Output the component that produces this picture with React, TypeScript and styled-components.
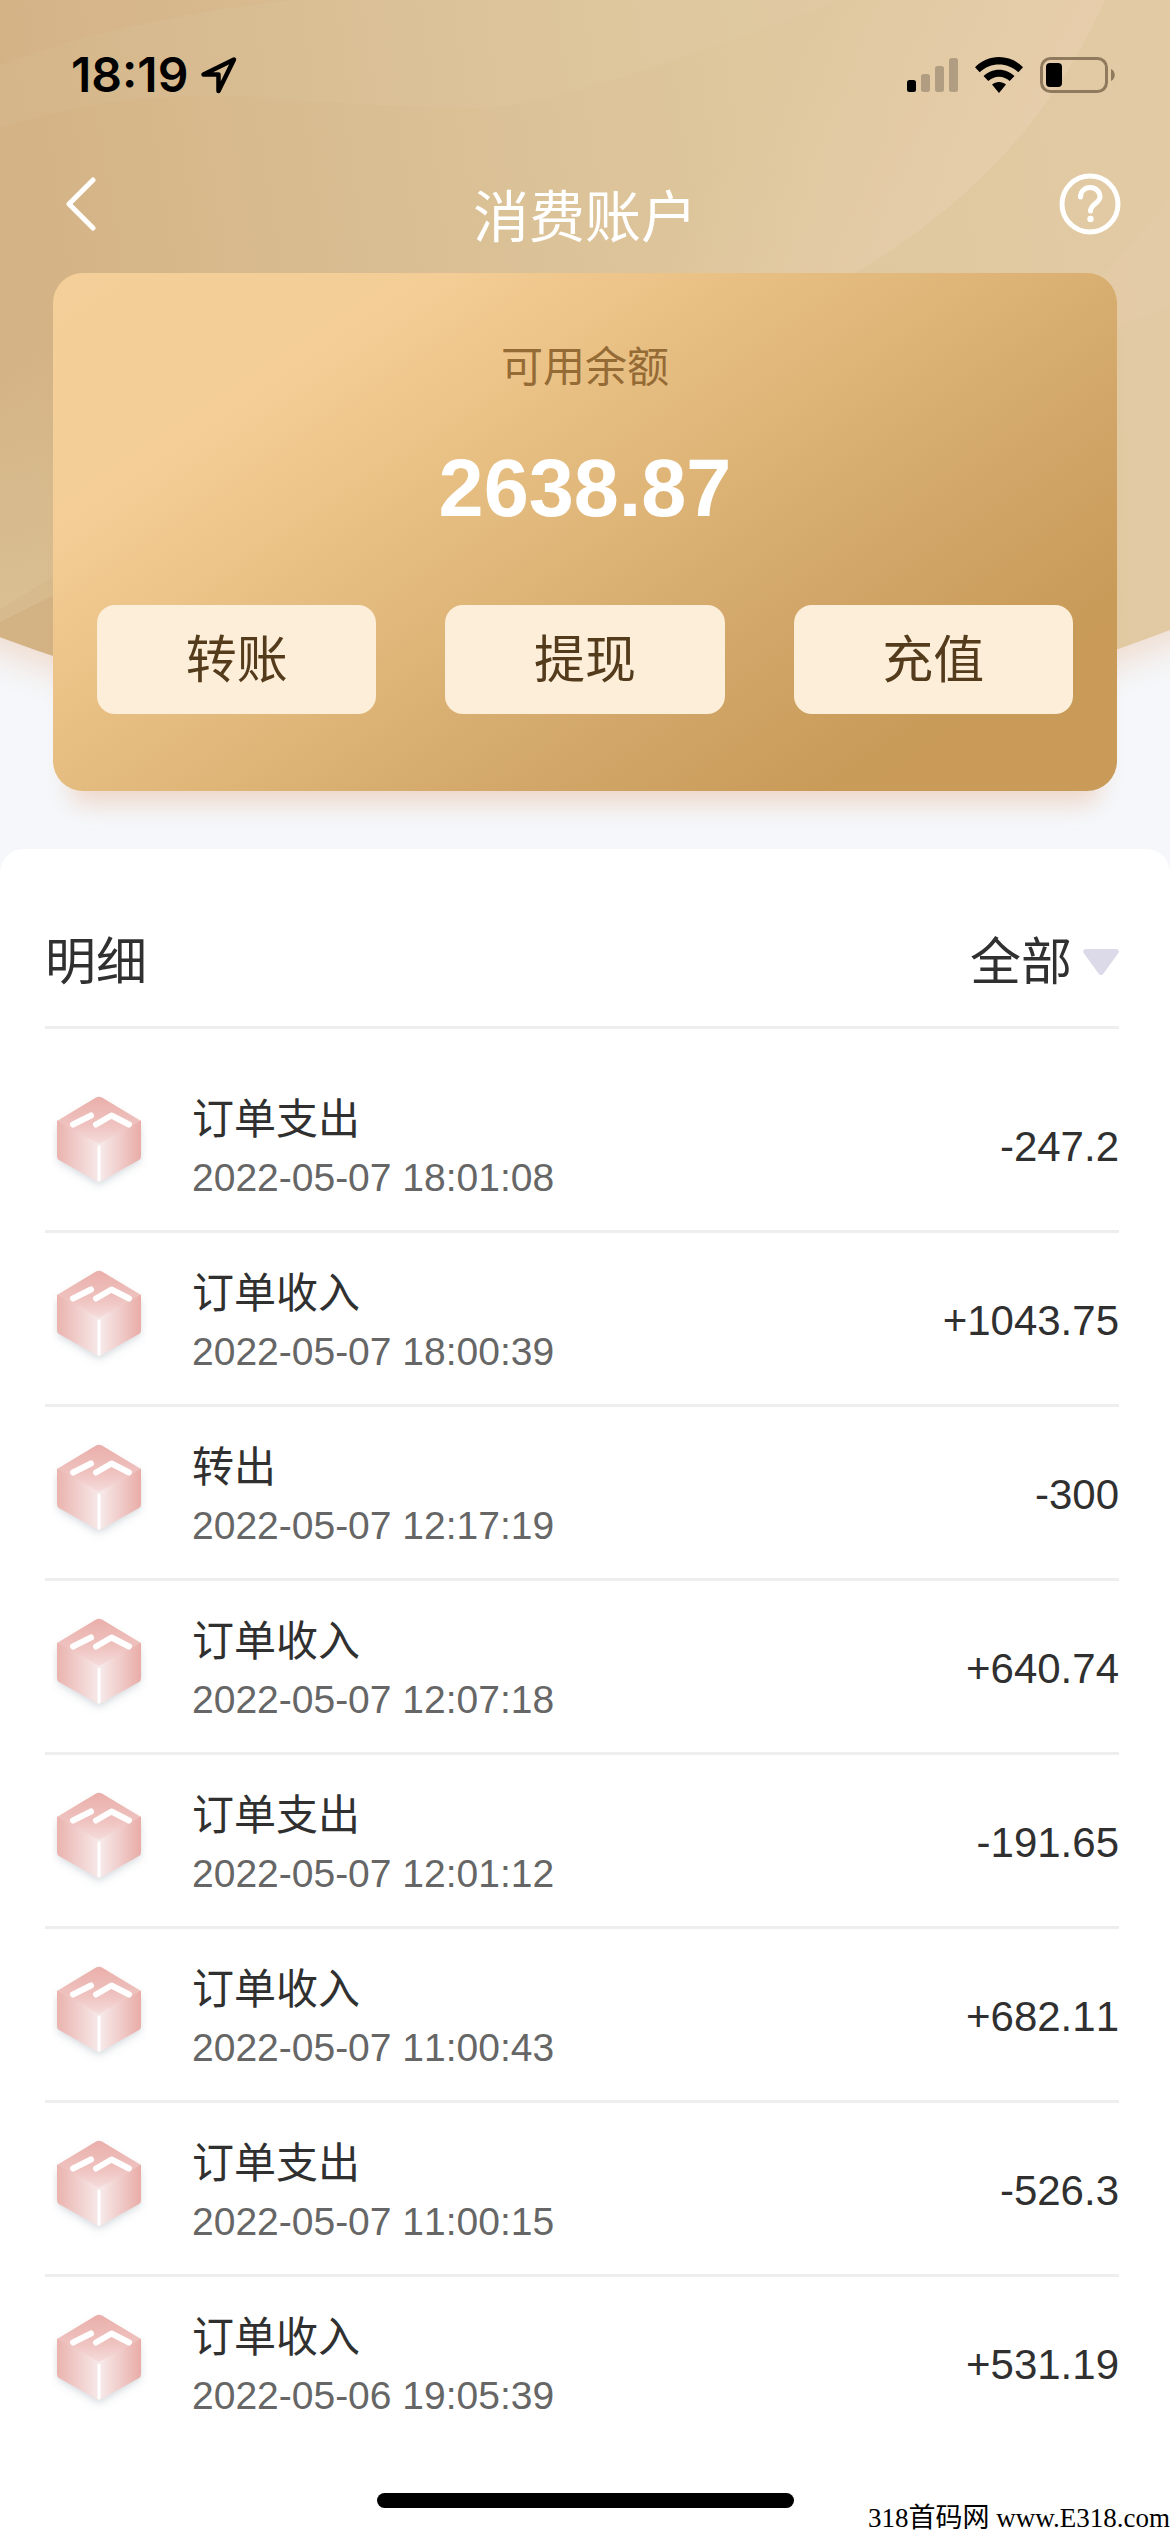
import React from "react";
import styled, { createGlobalStyle } from "styled-components";

const Global = createGlobalStyle`
  * { box-sizing: border-box; }
  body {
    margin: 0;
    background: #fff;
    color: #303030;
    font-family: "Liberation Sans", "Noto Sans CJK SC", sans-serif;
    font-kerning: none;
  }
  button, select { font: inherit; color: inherit; border: 0; padding: 0; cursor: pointer; }
  h1, h2, p, ul { margin: 0; padding: 0; font-weight: 400; }
`;

const Page = styled.div`
  display: flex;
  flex-direction: column;
  min-height: 100vh;
  background: #f5f7fa;
`;

const Hero = styled.div`
  position: relative;
  isolation: isolate;
  padding-bottom: 58px;
`;

const Backdrop = styled.svg`
  position: absolute;
  inset: 0 0 auto;
  z-index: -1;
  width: 100%;
  height: 760px;
`;

const StatusBar = styled.header`
  display: flex;
  align-items: center;
  justify-content: space-between;
  padding: 45px 54px 0 71px;
  height: 105px;
  color: #000;
`;

const StatusGroup = styled.div<{ $gap: number }>`
  display: flex;
  align-items: center;
  gap: ${(p) => p.$gap}px;
`;

const Time = styled.time`
  font: 600 48px/60px Inter, sans-serif;
`;

const NavBar = styled.nav`
  display: grid;
  grid-template-columns: 64px 1fr 64px;
  align-items: center;
  height: 168px;
  padding: 0 48px;
  color: #fff;
`;

const Title = styled.h1`
  padding-top: 58px;
  font-size: 56px;
  line-height: 60px;
  text-align: center;
`;

const IconButton = styled.button`
  display: flex;
  align-items: center;
  justify-content: center;
  height: 64px;
  margin-top: 30px;
  background: none;
`;

const Card = styled.section`
  display: flex;
  flex-direction: column;
  align-items: center;
  margin: 0 53px;
  padding: 68px 44px 77px;
  border-radius: 30px;
  color: #fff;
  background: linear-gradient(146deg, #f4cf99 0%, #f3cd95 22%, #edc489 32%, #dfb678 50%, #d1a668 68%, #c99b59 84%, #c99a58 100%);
  box-shadow: 0 30px 24px -18px rgba(228, 165, 125, 0.4);
`;

const CardLabel = styled.h2`
  font-size: 42px;
  line-height: 54px;
  color: #946a35;
`;

const Balance = styled.p`
  margin: 48px 0 72px;
  font-size: 81px;
  font-weight: 700;
  line-height: 90px;
`;

const Actions = styled.div`
  display: grid;
  grid-template-columns: repeat(3, 1fr);
  gap: 69px;
  width: 100%;
`;

const Action = styled.button`
  height: 109px;
  padding-top: 3px;
  border-radius: 18px;
  font-size: 51px;
  line-height: 60px;
  background: #fdeed9;
  && { color: #533b1b; }
`;

const Sheet = styled.main`
  flex: 1;
  display: flex;
  flex-direction: column;
  padding: 0 51px 0 45px;
  border-radius: 24px 24px 0 0;
  background: #fff;
`;

const SheetHeader = styled.div`
  display: flex;
  align-items: center;
  justify-content: space-between;
  height: 180px;
  padding-top: 50px;
  border-bottom: 3px solid #eeeeee;
  font-size: 51px;
  line-height: 60px;
`;

const SheetTitle = styled.h2`
  font-size: 51px;
`;

const Filter = styled.label`
  display: flex;
  align-items: center;
  gap: 10px;
`;

const FilterSelect = styled.select`
  appearance: none;
  background: none;
`;

const List = styled.ul`
  padding-top: 30px;
  list-style: none;
`;

const Row = styled.li`
  display: flex;
  align-items: center;
  height: 174px;
  padding: 0 0 0 7px;
  border-bottom: 3px solid #eeeeee;
  &:last-child { border-color: transparent; }
`;

const Detail = styled.div`
  flex: 1;
  padding: 8px 0 0 45px;
`;

const Kind = styled.p`
  font-size: 42px;
  line-height: 58px;
`;

const Stamp = styled.time`
  display: block;
  font-size: 39px;
  line-height: 58px;
  color: #666;
`;

const Amount = styled.span`
  padding-top: 4px;
  font-size: 42px;
  line-height: 58px;
`;

const Footer = styled.footer`
  position: relative;
  display: flex;
  justify-content: center;
  padding: 42px 0 24px;
  margin: 0 -51px 0 -45px;
`;

const HomeBar = styled.div`
  width: 417px;
  height: 15px;
  border-radius: 8px;
  background: #000;
`;

const Watermark = styled.span`
  position: absolute;
  right: 0;
  bottom: 0;
  font: 27px/28px "Liberation Serif", "Noto Sans CJK SC", serif;
  color: #000;
`;

const LocationIcon = () => (
  <svg width="38" height="38" viewBox="0 0 38 38" fill="none" stroke="#000" strokeWidth="4.500" strokeLinejoin="round">
    <path d="M34 3.500 3.500 18.500H18.500V35Z" />
  </svg>
);

const SignalIcon = () => (
  <svg width="51" height="34" viewBox="0 0 51 34">
    <rect y="22" width="9" height="12" rx="2.500" />
    <g opacity=".22">
      <rect x="14" y="16" width="9" height="18" rx="2.500" />
      <rect x="28" y="8" width="9" height="26" rx="2.500" />
      <rect x="42" width="9" height="34" rx="2.500" />
    </g>
  </svg>
);

const WifiIcon = () => (
  <svg width="48" height="36" viewBox="0 0 48 36">
    <path d="M24 0C33 0 42 3.700 48 10.300L43.300 15.300C38 10 31 7.400 24 7.400S10 10 4.700 15.300L0 10.300C6 3.700 15 0 24 0Z" />
    <path d="M24 12.700c6 0 11.500 2.500 15.500 6.400l-4.800 5c-3-2.700-6.700-4.300-10.700-4.300s-7.700 1.600-10.700 4.300l-4.800-5c4-3.900 9.500-6.400 15.500-6.400Z" />
    <path d="M24 25c2.700 0 5 1 7 2.600L24 36l-7-8.400c2-1.600 4.300-2.600 7-2.600Z" />
  </svg>
);

const BatteryIcon = () => (
  <svg width="76" height="36" viewBox="0 0 76 36">
    <rect x="1.500" y="1.500" width="65" height="33" rx="9" fill="none" stroke="#8f7a5e" strokeWidth="3" />
    <rect x="6" y="6" width="16" height="24" rx="4" />
    <path d="M71 12c5 2 5 10 0 12Z" fill="#8f7a5e" />
  </svg>
);

const BackIcon = () => (
  <svg width="32" height="54" viewBox="0 0 32 54" fill="none" stroke="#fff" strokeWidth="5" strokeLinecap="round" strokeLinejoin="round">
    <path d="M29 3 5 27l24 24" />
  </svg>
);

const HelpIcon = () => (
  <svg width="62" height="62" viewBox="0 0 62 62" fill="none" stroke="#fff" strokeWidth="5" strokeLinecap="round">
    <circle cx="31" cy="31" r="28" />
    <path d="M21.500 24c0-6 4.500-9.500 9.700-9.500s9.800 3.800 9.800 9.200c0 6.300-9.500 7.300-9.500 14.300" />
    <circle cx="31.500" cy="46" r="3.200" fill="#fff" stroke="none" />
  </svg>
);

const CaretIcon = () => (
  <svg width="36" height="27" viewBox="0 0 36 27">
    <path d="M3 0h30c2.500 0 3.700 2.500 2 4.500L20.500 24.500c-1.500 2-3.500 2-5 0L1 4.500C-.7 2.500.5 0 3 0Z" fill="#dcd9e9" />
  </svg>
);

const CubeIcon = () => (
  <svg width="95" height="115" viewBox="0 0 95 115">
    <use href="#cube" />
  </svg>
);

const HiddenDefs = styled.svg`
  position: absolute;
`;

const CubeDefs = () => (
  <HiddenDefs width="0" height="0" aria-hidden="true">
    <defs>
      <linearGradient id="cubeTop" x1="0" y1="0" x2="0" y2="1">
        <stop offset="0" stopColor="#eaafaa" />
        <stop offset=".6" stopColor="#efc3c0" />
        <stop offset="1" stopColor="#f5dedd" />
      </linearGradient>
      <linearGradient id="cubeLeft">
        <stop offset="0" stopColor="#eab3ae" />
        <stop offset="1" stopColor="#f7e9e9" />
      </linearGradient>
      <linearGradient id="cubeRight">
        <stop offset="0" stopColor="#f7ecec" />
        <stop offset="1" stopColor="#e9aca7" />
      </linearGradient>
      <filter id="cubeShadow" x="-20%" y="-20%" width="140%" height="150%">
        <feDropShadow dx="0" dy="4" stdDeviation="4" floodColor="#6b7c8c" floodOpacity=".3" />
      </filter>
      <g id="cube">
        <path d="M47 12 6 36v34l41 24 41-24V36Z" fill="#f2cfcc" filter="url(#cubeShadow)" />
        <path d="M44 10.500q3-1.500 6 0L89 34 47 58 5 34Z" fill="url(#cubeTop)" />
        <path d="M5 33.500 47 57v38.500L7 73q-2-1-2-4Z" fill="url(#cubeLeft)" />
        <path d="M89 33.500 47 57v38.500L87 73q2-1 2-4Z" fill="url(#cubeRight)" />
        <g fill="none" stroke="#fff" strokeLinecap="round" strokeLinejoin="round">
          <path d="M21 37.500 39 28.500M44 37.500 59.500 28.500 77 37.500" strokeWidth="6" />
          <path d="M47 60V93" strokeWidth="3" />
        </g>
      </g>
    </defs>
  </HiddenDefs>
);

const HeroBackdrop = () => (
  <Backdrop viewBox="0 0 1170 760" preserveAspectRatio="none" aria-hidden="true">
    <defs>
      <linearGradient id="sand" x1="0" y1="0.100" x2="1" y2="0">
        <stop offset="0" stopColor="#d3b284" />
        <stop offset=".35" stopColor="#dabf94" />
        <stop offset=".65" stopColor="#dfc89f" />
        <stop offset="1" stopColor="#e3cba6" />
      </linearGradient>
      <linearGradient id="glowRight" gradientUnits="userSpaceOnUse" x1="780" y1="60" x2="980" y2="180">
        <stop offset="0" stopColor="#eed2b6" stopOpacity="0" />
        <stop offset="1" stopColor="#eed2b6" stopOpacity=".4" />
      </linearGradient>
      <linearGradient id="glowLeft" gradientUnits="userSpaceOnUse" x1="0" y1="330" x2="0" y2="600">
        <stop offset="0" stopColor="#e2d2a8" stopOpacity="0" />
        <stop offset="1" stopColor="#e2d2a8" stopOpacity=".4" />
      </linearGradient>
      <filter id="sandShadow" x="-10%" y="-10%" width="120%" height="130%">
        <feDropShadow dx="0" dy="14" stdDeviation="18" floodColor="#e8b48c" floodOpacity=".4" />
      </filter>
    </defs>
    <path d="M-60-60H1230V606Q585 878-60 614Z" fill="url(#sand)" filter="url(#sandShadow)" />
    <path d="M0 128Q120 88 260 98T480 108 840 0H0Z" fill="#fff" opacity=".035" />
    <path d="M0 65Q120 20 290 0H0Z" fill="#c79a63" opacity=".08" />
    <path d="M1105 0Q1030 170 855 273H640L840 0Z" fill="url(#glowRight)" />
    <path d="M1170 304 1100 336V280L1170 200Z" fill="#eed2b6" opacity=".2" />
    <path d="M0 330H60V572L0 610Z" fill="url(#glowLeft)" />
    <path d="M0 622 60 592V572L0 610Z" fill="#e2d2a8" opacity=".25" />
  </Backdrop>
);

const records = [
  ["订单支出", "2022-05-07 18:01:08", "-247.2"],
  ["订单收入", "2022-05-07 18:00:39", "+1043.75"],
  ["转出", "2022-05-07 12:17:19", "-300"],
  ["订单收入", "2022-05-07 12:07:18", "+640.74"],
  ["订单支出", "2022-05-07 12:01:12", "-191.65"],
  ["订单收入", "2022-05-07 11:00:43", "+682.11"],
  ["订单支出", "2022-05-07 11:00:15", "-526.3"],
  ["订单收入", "2022-05-06 19:05:39", "+531.19"],
];

export default function App() {
  return (
    <Page>
      <Global />
      <CubeDefs />
      <Hero>
        <HeroBackdrop />
        <StatusBar>
          <StatusGroup $gap={12}>
            <Time>18:19</Time>
            <LocationIcon />
          </StatusGroup>
          <StatusGroup $gap={17}>
            <SignalIcon />
            <WifiIcon />
            <BatteryIcon />
          </StatusGroup>
        </StatusBar>
        <NavBar>
          <IconButton aria-label="返回"><BackIcon /></IconButton>
          <Title>消费账户</Title>
          <IconButton aria-label="帮助"><HelpIcon /></IconButton>
        </NavBar>
        <Card>
          <CardLabel>可用余额</CardLabel>
          <Balance>2638.87</Balance>
          <Actions>
            <Action>转账</Action>
            <Action>提现</Action>
            <Action>充值</Action>
          </Actions>
        </Card>
      </Hero>
      <Sheet>
        <SheetHeader>
          <SheetTitle>明细</SheetTitle>
          <Filter>
            <FilterSelect aria-label="筛选">
              <option>全部</option>
            </FilterSelect>
            <CaretIcon />
          </Filter>
        </SheetHeader>
        <List>
          {records.map(([kind, stamp, amount]) => (
            <Row key={stamp}>
              <CubeIcon />
              <Detail>
                <Kind>{kind}</Kind>
                <Stamp>{stamp}</Stamp>
              </Detail>
              <Amount>{amount}</Amount>
            </Row>
          ))}
        </List>
        <Footer>
          <HomeBar />
          <Watermark>318首码网 www.E318.com</Watermark>
        </Footer>
      </Sheet>
    </Page>
  );
}
